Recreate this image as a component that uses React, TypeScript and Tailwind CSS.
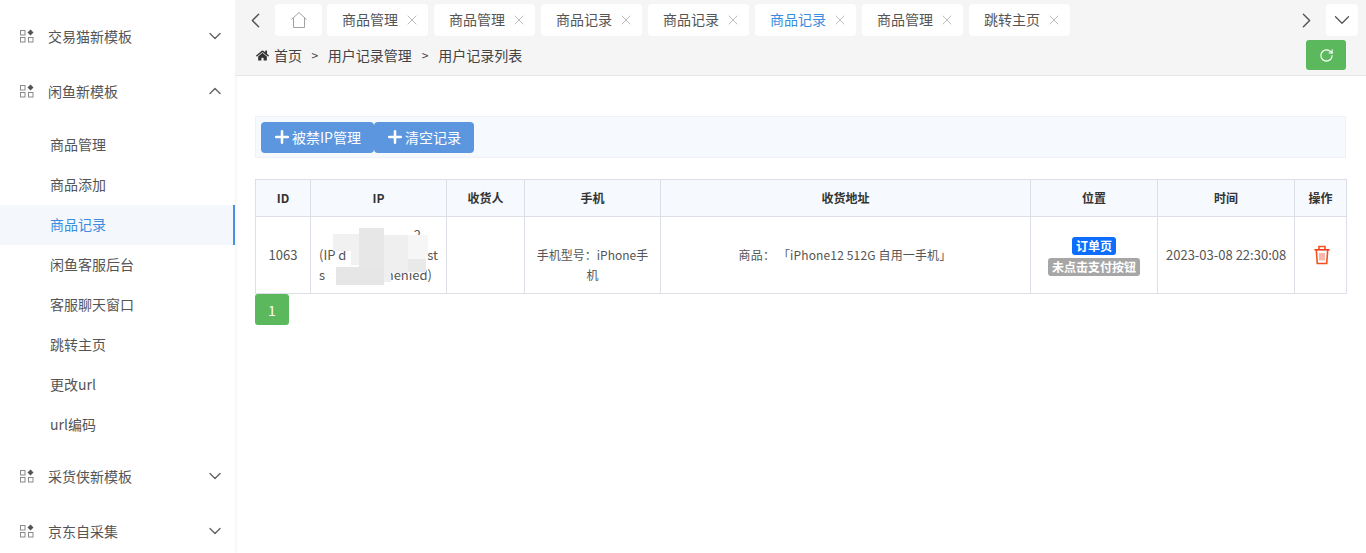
import { ChevronDown, ChevronLeft, ChevronRight, ChevronUp, Plus, RotateCw, X } from 'lucide-react'
import { FaHome } from 'react-icons/fa'

const font = 'font-["Noto_Sans_CJK_SC","Open_Sans",sans-serif]'

function MenuIcon() {
  return (
    <svg width="14" height="14" viewBox="0 0 14 14" fill="none" stroke="#8a8a8a" strokeWidth="1" className="shrink-0">
      <rect x="0.5" y="1.5" width="4.5" height="4.5" />
      <rect x="0.5" y="8.5" width="4.5" height="4.5" />
      <rect x="8.5" y="8.5" width="4.5" height="4.5" />
      <path d="M10.5 0.5 L13.5 3.5 L10.5 6.5 L7.5 3.5 Z" fill="#555" stroke="none" />
    </svg>
  )
}

function MenuGroup({ label, open }: { label: string; open?: boolean }) {
  return (
    <div className="flex h-[55px] items-center pb-1 pl-5 pr-[10px] text-sm text-[#555]">
      <MenuIcon />
      <span className="ml-[14px] flex-1">{label}</span>
      <span className="text-[#666]">
        {open ? <ChevronUp size={20} strokeWidth={1.7} /> : <ChevronDown size={20} strokeWidth={1.7} />}
      </span>
    </div>
  )
}

const subItems = ['商品管理', '商品添加', '商品记录', '闲鱼客服后台', '客服聊天窗口', '跳转主页', '更改url', 'url编码']

function Sidebar() {
  return (
    <aside className="h-full w-[235px] shrink-0 overflow-hidden bg-white pt-[10px] shadow-[1px_0_3px_rgba(0,0,0,0.06)]">
      <MenuGroup label="交易猫新模板" />
      <MenuGroup label="闲鱼新模板" open />
      <ul className="py-[5px]">
        {subItems.map((item) => (
          <li
            key={item}
            className={
              item === '商品记录'
                ? 'flex h-10 items-center border-r-2 border-[#4a90e2] bg-[#f4f8fd] pb-[2px] pl-[50px] text-sm text-[#3b8cdf]'
                : 'flex h-10 items-center pb-[2px] pl-[50px] text-sm text-[#555]'
            }
          >
            {item}
          </li>
        ))}
      </ul>
      <MenuGroup label="采货侠新模板" />
      <MenuGroup label="京东自采集" />
    </aside>
  )
}

const tabs = ['商品管理', '商品管理', '商品记录', '商品记录', '商品记录', '商品管理', '跳转主页']

function TabBar() {
  return (
    <div className="flex h-8 items-center">
      <button className="flex w-10 justify-center text-[#555]">
        <ChevronLeft size={25} strokeWidth={1.4} />
      </button>
      <div className="flex h-8 w-[47px] items-center justify-center rounded bg-white">
        <svg width="18" height="18" viewBox="0 0 18 18" fill="none" stroke="#a3a0a0" strokeWidth="1">
          <path d="M1.5 8.5 L9 1.5 L16.5 8.5" />
          <path d="M3.5 7 V16.5 H14.5 V7" />
        </svg>
      </div>
      <div className="ml-[5px] flex flex-1 gap-[6px]">
        {tabs.map((tab, i) => (
          <div key={i} className="flex h-8 w-[101px] items-center rounded bg-white pb-[2px] pl-[15px] text-sm">
            <span className={i === 4 ? 'text-[#3b8cdf]' : 'text-[#555]'}>{tab}</span>
            <X size={16} strokeWidth={1.4} className="ml-[6px] mt-[2px] text-[#b8b8b8]" />
          </div>
        ))}
      </div>
      <button className="flex w-10 justify-center text-[#555]">
        <ChevronRight size={25} strokeWidth={1.4} />
      </button>
      <div className="mr-2 flex h-8 w-8 items-center justify-center rounded bg-white text-[#555]">
        <ChevronDown size={26} strokeWidth={1.2} />
      </div>
    </div>
  )
}

function Breadcrumb() {
  return (
    <div className="mt-1 flex h-[30px] items-center pl-[21px] pr-5">
      <FaHome size={13} className="text-[#333]" />
      <div className="ml-[5px] flex flex-1 items-center pb-px text-sm text-[#444]">
        <span>首页</span>
        <span className="mx-[9.5px] text-xs">&gt;</span>
        <span>用户记录管理</span>
        <span className="mx-[10px] text-xs">&gt;</span>
        <span>用户记录列表</span>
      </div>
      <button className="flex h-[30px] w-10 items-center justify-center rounded-[3px] bg-[#5cb85c] text-white">
        <RotateCw size={15} strokeWidth={1.8} />
      </button>
    </div>
  )
}

function TrashIcon() {
  return (
    <svg width="18" height="20" viewBox="0 0 18 20" fill="none" stroke="#f4511e" strokeWidth="1.6" className="mx-auto translate-x-[1px]">
      <path d="M1.5 4.8 H16.5" stroke="#f23c1c" />
      <path d="M6 4 V1.5 H12 V4" />
      <path d="M3.3 5 L4.3 18.5 H13.7 L14.7 5" />
      <path d="M7 8 V15.5 M9 8 V15.5 M11 8 V15.5" strokeWidth="1" stroke="#f0705a" />
    </svg>
  )
}

// mosaic that hides the address in the IP cell
const smudges = [
  'left-[22px] top-[17px] h-[17px] w-[27px] bg-[#f1f1f1]',
  'left-[40px] top-[34px] h-[14px] w-[9px] bg-[#f1f1f1]',
  'left-[48px] top-[11px] h-[54px] w-[25px] bg-[#e7e7e7]',
  'left-[73px] top-[18px] h-[38px] w-[24px] bg-[#efefef]',
  'left-[73px] top-[56px] h-[9px] w-[7px] bg-[#efefef]',
  'left-[97px] top-[18px] h-[24px] w-[20px] bg-[#f6f6f6]',
  'left-[97px] top-[42px] h-[13px] w-[18px] bg-[#e9e9e9]',
  'left-[25px] top-[50px] h-[18px] w-[48px] bg-[#e6e6e6]',
]

const th = 'border border-[#dcdfe6] font-bold text-xs text-[#333]'
const td = 'border border-[#dcdfe6] px-2 text-center text-xs leading-[20px] text-[#555]'

function RecordTable() {
  return (
    <table className="w-full table-fixed border-collapse">
      <colgroup>
        <col className="w-[55px]" />
        <col className="w-[136px]" />
        <col className="w-[78px]" />
        <col className="w-[136px]" />
        <col className="w-[370px]" />
        <col className="w-[127px]" />
        <col className="w-[137px]" />
        <col className="w-[52px]" />
      </colgroup>
      <thead>
        <tr className="h-[37px] bg-[#f6f9fe]">
          {['ID', 'IP', '收货人', '手机', '收货地址', '位置', '时间', '操作'].map((h) => (
            <th key={h} className={th}>
              {h}
            </th>
          ))}
        </tr>
      </thead>
      <tbody>
        <tr className="h-[77px]">
          <td className={`${td} text-[13px]`}>1063</td>
          <td className={`${td} relative text-[13px]`}>
            <div className="text-left">
              <div className="pr-[17px] text-right">.. 2</div>
              <div className="flex justify-between">
                <span>(IP d</span>
                <span>st</span>
              </div>
              <div className="flex justify-between pr-[6px]">
                <span>s</span>
                <span>nenied)</span>
              </div>
            </div>
            {smudges.map((s) => (
              <div key={s} className={`absolute ${s}`} />
            ))}
          </td>
          <td className={td} />
          <td className={`${td} pt-5`}>手机型号：iPhone手机</td>
          <td className={td}>
            <div className="-ml-[1px] tracking-[0.15px]">商品： 「iPhone12 512G 自用一手机」</div>
          </td>
          <td className={td}>
            <div className="flex flex-col items-center gap-[3px] pt-[2px]">
              <span className="rounded-[3px] bg-[#0d6efd] px-1 text-xs font-bold leading-[18px] text-white">订单页</span>
              <span className="rounded-[3px] bg-[#a6a6a6] px-1 text-xs font-bold leading-[18px] text-white">未点击支付按钮</span>
            </div>
          </td>
          <td className={`${td} whitespace-nowrap text-[13px]`}>2023-03-08 22:30:08</td>
          <td className={td}>
            <TrashIcon />
          </td>
        </tr>
      </tbody>
    </table>
  )
}

function ActionButton({ label, className }: { label: string; className: string }) {
  return (
    <button className={`flex h-[31px] items-center rounded-[4px] bg-[#5b96de] pl-[11px] text-sm text-white ${className}`}>
      <Plus size={20} strokeWidth={3} className="shrink-0" />
      {label}
    </button>
  )
}

export default function App() {
  return (
    <div className={`flex h-[553px] w-[1366px] overflow-hidden bg-white ${font}`}>
      <Sidebar />
      <main className="flex min-w-0 flex-1 flex-col">
        <header className="h-[76px] shrink-0 border-b border-[#e6e6e6] bg-[#f5f5f6] pt-1">
          <TabBar />
          <Breadcrumb />
        </header>
        <section className="pl-5 pr-5 pt-10">
          <div className="flex h-[42px] items-center border border-[#edf2f9] bg-[#f6f9fe] pl-[5px]">
            <ActionButton label="被禁IP管理" className="w-[113px]" />
            <ActionButton label="清空记录" className="w-[100px]" />
          </div>
          <div className="mt-[21px]">
            <RecordTable />
          </div>
          <button className="flex h-[31px] w-[34px] items-center justify-center rounded-[3px] bg-[#5cb85c] text-sm text-white">
            1
          </button>
        </section>
      </main>
    </div>
  )
}
